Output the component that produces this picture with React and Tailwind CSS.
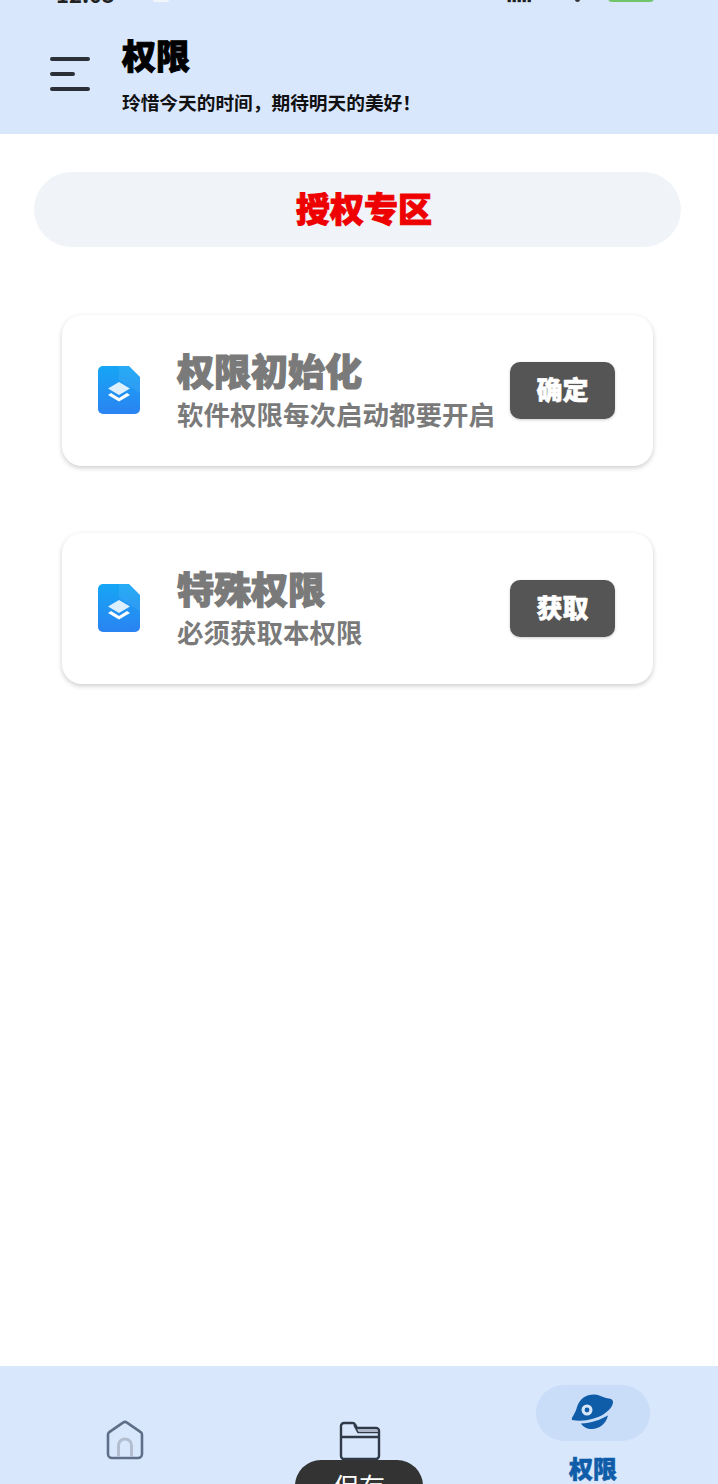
const CJK = "font-['Noto_Sans_CJK_SC','Noto_Sans',sans-serif]";

function MenuIcon() {
  return (
    <div className="flex w-[40px] flex-col gap-[11px]">
      <div className="h-[4px] w-[40px] rounded-full bg-[#2b3038]" />
      <div className="h-[4px] w-[25px] rounded-full bg-[#2b3038]" />
      <div className="h-[4px] w-[40px] rounded-full bg-[#2b3038]" />
    </div>
  );
}

function DocIcon() {
  return (
    <svg width="42" height="48" viewBox="0 0 42 48" className="mb-[2px] shrink-0">
      <defs>
        <linearGradient id="docFill" x1="0" y1="0" x2="0" y2="1">
          <stop offset="0" stopColor="#16a6f5" />
          <stop offset="1" stopColor="#2a83f2" />
        </linearGradient>
      </defs>
      <path d="M5 0H31L42 11V43a5 5 0 0 1-5 5H5a5 5 0 0 1-5-5V5a5 5 0 0 1 5-5Z" fill="url(#docFill)" />
      <path d="M21 0H31L42 11V27L21 14Z" fill="#fff" fillOpacity="0.07" />
      <path d="M21 16L32 22.500L21 29L10 22.500Z" fill="#fff" fillOpacity="0.85" />
      <path d="M13 27L21 32L29 27L32 29L21 35.500L10 29Z" fill="#fff" />
    </svg>
  );
}

function HomeIcon() {
  return (
    <svg width="40" height="40" viewBox="0 0 40 40" fill="none">
      <path d="M3 14.500a3 3 0 0 1 1.300-2.400L18 2.600a3.400 3.400 0 0 1 4 0l13.700 9.500a3 3 0 0 1 1.300 2.400V34a4 4 0 0 1-4 4H7a4 4 0 0 1-4-4Z" stroke="#5f6f87" strokeWidth="2.600" />
      <path d="M13.500 37V25.500a6.500 6.500 0 0 1 13 0V37" stroke="#b3bdd0" strokeWidth="3" />
    </svg>
  );
}

function FolderIcon() {
  return (
    <svg width="42" height="40" viewBox="0 0 42 40" fill="none">
      <path d="M2 16V5a3 3 0 0 1 3-3h8.500a3 3 0 0 1 2.600 1.500L18 7h19a3 3 0 0 1 3 3v25a3 3 0 0 1-3 3H5a3 3 0 0 1-3-3Z" stroke="#2f3947" strokeWidth="2.400" strokeLinejoin="round" />
      <path d="M2 16H40" stroke="#2f3947" strokeWidth="2.400" />
      <path d="M15 4L19 11.500H39" stroke="#2f3947" strokeWidth="1.600" />
      <path d="M19 8.500H38.500V10.500H20Z" fill="#aab4c4" />
    </svg>
  );
}

function PlanetIcon() {
  return (
    <svg width="44" height="37" viewBox="0 0 44 37">
      <path d="M1 27C0 24 4 22 6 14C9 5 16 1 24 1.500C28 2 31 4 35 5C39 5.500 42 6 42 9C42 14 37 18 33 21C25 26 13 29 1 27Z" fill="#0f5ca8" />
      <path d="M10 30.500C20 30 29 27 37 22.500C35 31 28 36 21 36C16 36 12 34 10 30.500Z" fill="#0f5ca8" />
      <circle cx="16" cy="17" r="5.500" fill="#d7e6fb" />
      <circle cx="16" cy="17" r="2.400" fill="#0f5ca8" />
    </svg>
  );
}

function PermCard({ title, desc, action }) {
  return (
    <div className="ml-[62px] flex h-[151px] w-[591px] items-center rounded-[20px] bg-white pl-[36px] shadow-[0_2px_5px_rgba(0,0,0,0.2)]">
      <DocIcon />
      <div className="mb-[3px] ml-[37px] w-[333px] shrink-0">
        <div className="text-[37px] leading-[42px] font-black text-[#7a7a7a] [-webkit-text-stroke:1.200px_#7a7a7a]">{title}</div>
        <div className="mt-[7px] text-[26.500px] leading-[32px] font-bold text-[#7a7a7a]">{desc}</div>
      </div>
      <button className="h-[57px] w-[105px] rounded-[10px] bg-[#555] pb-[4px] text-[26px] font-black text-white shadow-[0_1px_3px_rgba(0,0,0,0.2)] [-webkit-text-stroke:0.600px_#fff]">
        {action}
      </button>
    </div>
  );
}

export default function App() {
  return (
    <div className={`relative flex h-[1484px] w-[718px] flex-col overflow-hidden bg-white ${CJK}`}>
      {/* top bar, status bar is cut off by the page edge */}
      <header className="relative h-[134px] shrink-0 bg-[#d9e7fd]">
        <div className="absolute top-[-16px] left-[56px] text-[22px] leading-[18px] font-bold text-[#222]">12:05</div>
        <div className="absolute top-[-4px] left-[153px] h-[6px] w-[16px] rounded-[2px] bg-[#f2f6fb]" />
        <div className="absolute top-[-6px] left-[507px] text-[8px] leading-[8px] font-bold tracking-[1px] text-[#222]">▮▮▮▮▮</div>
        <div className="absolute top-[-3px] left-[575px] h-[5px] w-[5px] rounded-full bg-[#333]" />
        <div className="absolute top-[-8px] left-[608px] h-[10px] w-[46px] rounded-[4px] bg-[#6fc568]" />
        <div className="flex h-full items-start pt-[57px] pl-[50px]">
          <MenuIcon />
        </div>
        <div className="absolute top-[32px] left-[122px]">
          <div className="text-[34px] leading-[46px] font-black text-black [-webkit-text-stroke:1px_#000]">权限</div>
          <div className="mt-[12px] text-[18.700px] leading-[24px] font-bold text-[#111]">玲惜今天的时间，期待明天的美好！</div>
        </div>
      </header>

      <main className="flex-1">
        <div className="mt-[38px] ml-[34px] flex h-[75px] w-[647px] items-center justify-center rounded-full bg-[#f0f3f8] pb-[5px] pl-[13px]">
          <span className="text-[34px] font-black text-[#ee0000] [-webkit-text-stroke:1px_#ee0000]">授权专区</span>
        </div>
        <div className="mt-[68px] flex flex-col gap-[67px]">
          <PermCard title="权限初始化" desc="软件权限每次启动都要开启" action="确定" />
          <PermCard title="特殊权限" desc="必须获取本权限" action="获取" />
        </div>
      </main>

      <nav className="flex h-[118px] shrink-0 bg-[#d9e7fd]">
        <div className="ml-[105px] pt-[54px]">
          <HomeIcon />
        </div>
        <div className="ml-[194px] pt-[55px]">
          <FolderIcon />
        </div>
        <div className="ml-[155px] flex w-[114px] flex-col items-center pt-[19px]">
          <div className="flex h-[56px] w-[114px] items-center justify-center rounded-full bg-[#c9dcf8] pb-[3px]">
            <PlanetIcon />
          </div>
          <div className="mt-[12px] text-[24px] leading-[30px] font-black text-[#0f5ca8] [-webkit-text-stroke:0.600px_#0f5ca8]">权限</div>
        </div>
      </nav>

      {/* toast over the nav */}
      <div className="absolute top-[1460px] left-[295px] flex h-[60px] w-[128px] justify-center rounded-[26px] bg-[#333] pt-[8px] text-[26px] leading-[36px] text-white">
        保存
      </div>
    </div>
  );
}
